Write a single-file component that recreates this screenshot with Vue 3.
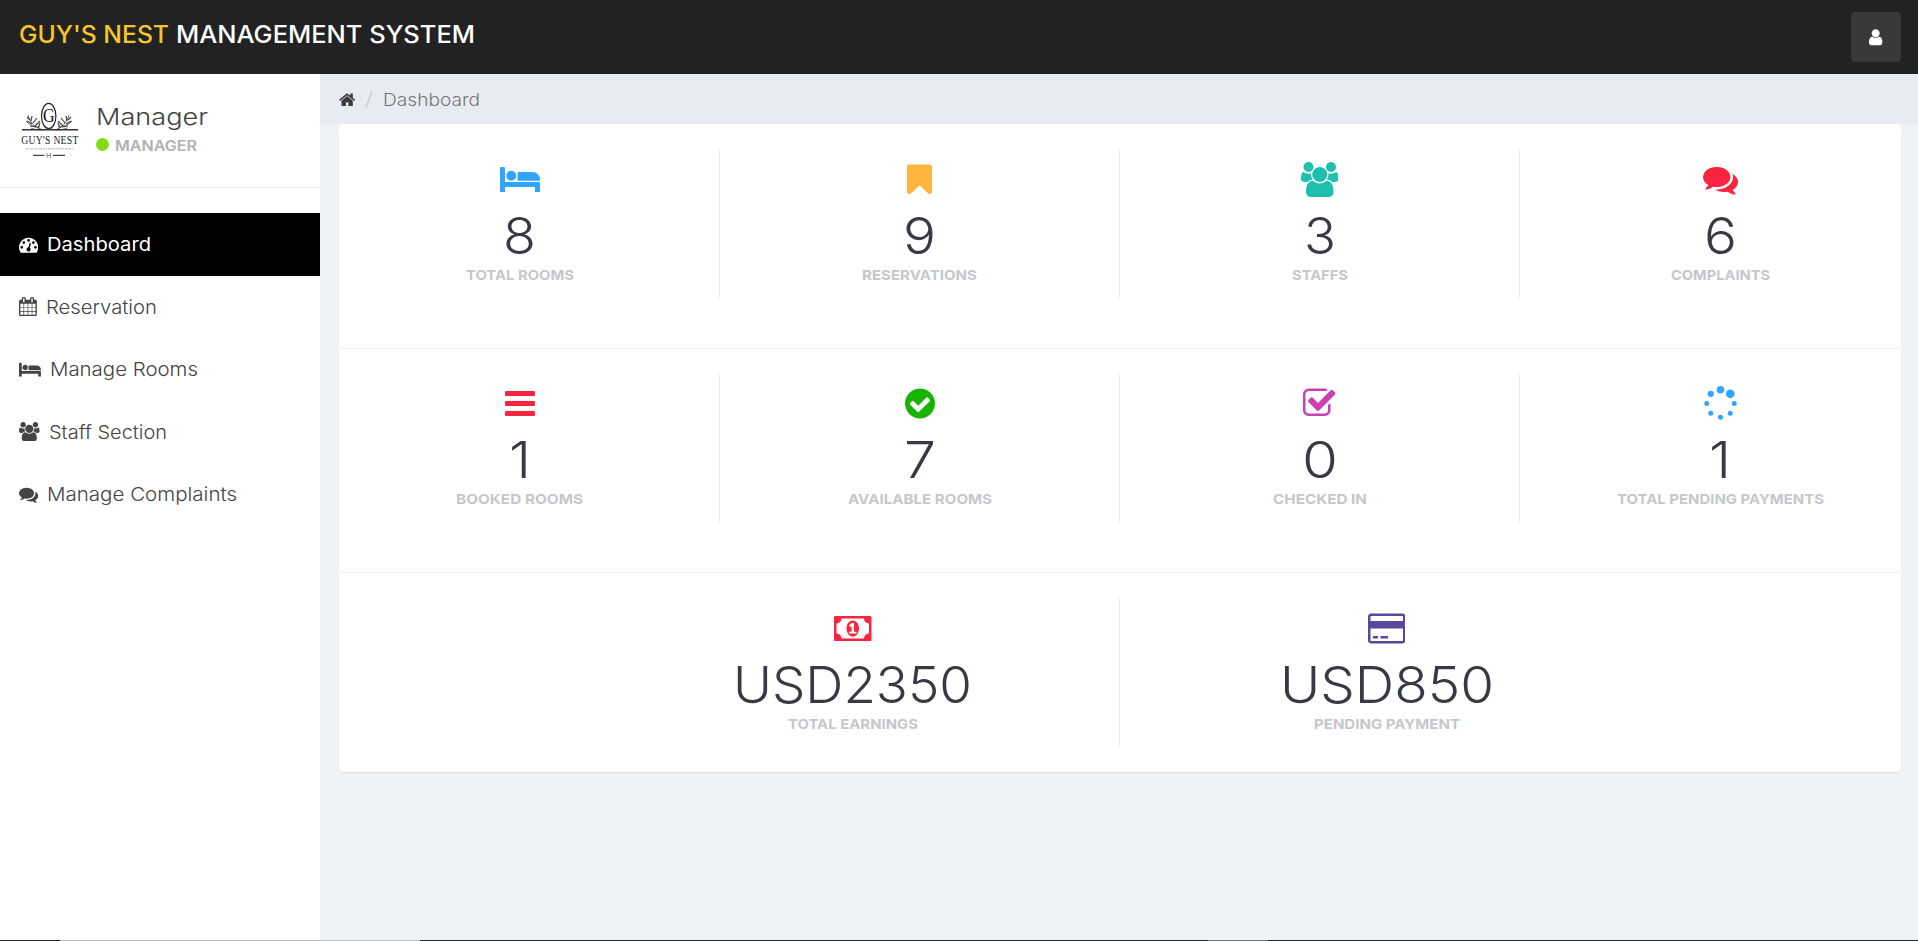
<script setup>
import { h } from 'vue'

const dial = [[256, 1152], [448, 704], [896, 512], [1344, 704], [1536, 1152]]
  .map(([x, y]) => `M${x - 128} ${y}a128 128 0 1 0 256 0a128 128 0 1 0-256 0z`)
  .join('')
const dots = [[398, 1394, 128], [896, 1600, 128], [192, 896, 128], [1394, 1394, 128], [398, 398, 160], [1600, 896, 128], [896, 192, 192], [1394, 398, 224]]
  .map(([x, y, r]) => `M${x - r} ${y}a${r} ${r} 0 1 0 ${2 * r} 0a${r} ${r} 0 1 0-${2 * r} 0z`)
  .join('')

const glyphs = {
  bed: [0, 2048, 'M256 1024h1728q26 0 45 19t19 45v448h-256v-256h-1536v256h-256v-1216q0-26 19-45t45-19h128q26 0 45 19t19 45v704zm576-320q0-106-75-181t-181-75-181 75-75 181 75 181 181 75 181-75 75-181zm1216 256v-64q0-159-112.5-271.5t-271.5-112.5h-704q-26 0-45 19t-19 45v384h1152z'],
  bookmark: [256, 1280, 'M1420 128q23 0 44 9 33 13 52.5 41t19.5 62v1289q0 34-19.5 62t-52.5 41q-19 8-44 8-48 0-83-32l-441-424-441 424q-36 33-83 33-23 0-44-9-33-13-52.5-41t-19.5-62v-1289q0-34 19.5-62t52.5-41q21-9 44-9h1048z'],
  users: [0, 1920, 'M593 896q-162 5-265 128h-134q-82 0-138-40.5t-56-118.5q0-353 124-353 6 0 43.5 21t97.5 42.5 119 21.5q67 0 133-23-5 37-5 66 0 139 81 256zm1071 637q0 120-73 189.5t-194 69.5h-874q-121 0-194-69.5t-73-189.5q0-53 3.5-103.5t14-109 26.5-108.5 43-97.5 62-81 85.5-53.5 111.5-20q10 0 43 21.5t73 48 107 48 135 21.5 135-21.5 107-48 73-48 43-21.5q61 0 111.5 20t85.5 53.5 62 81 43 97.5 26.5 108.5 14 109 3.5 103.5zm-1024-1277q0 106-75 181t-181 75-181-75-75-181 75-181 181-75 181 75 75 181zm704 384q0 159-112.5 271.5t-271.5 112.5-271.5-112.5-112.5-271.5 112.5-271.5 271.5-112.5 271.5 112.5 112.5 271.5zm576 225q0 78-56 118.5t-138 40.5h-134q-103-123-265-128 81-117 81-256 0-29-5-66 66 23 133 23 59 0 119-21.5t97.5-42.5 43.5-21q124 0 124 353zm-128-609q0 106-75 181t-181 75-181-75-75-181 75-181 181-75 181 75 75 181z'],
  comments: [0, 1792, 'M1408 768q0 139-94 257t-256.5 186.5-353.5 68.5q-86 0-176-16-124 88-278 128-36 9-86 16h-3q-11 0-20.5-8t-11.5-21q-1-3-1-6.5t.5-6.5 2-6l2.5-5 3.5-5.5 4-5 4.5-5 4-4.5q5-6 23-25t26-29.5 22.5-29 25-38.5 20.5-44q-124-72-195-177t-71-224q0-139 94-257t256.5-186.5 353.5-68.5 353.5 68.5 256.5 186.5 94 257zm384 256q0 120-71 224.5t-195 176.5q10 24 20.5 44t25 38.5 22.5 29 26 29.5 23 25q1 1 4 4.5t4.5 5 4 5 3.5 5.5l2.5 5 2 6 .5 6.5-1 6.5q-3 14-13 22t-22 7q-50-7-86-16-154-40-278-128-90 16-176 16-271 0-472-132 58 4 88 4 161 0 309-45t264-129q125-92 192-212t67-254q0-77-23-152 129 71 204 178t75 230z'],
  bars: [128, 1536, 'M1664 1344v128q0 26-19 45t-45 19h-1408q-26 0-45-19t-19-45v-128q0-26 19-45t45-19h1408q26 0 45 19t19 45zm0-512v128q0 26-19 45t-45 19h-1408q-26 0-45-19t-19-45v-128q0-26 19-45t45-19h1408q26 0 45 19t19 45zm0-512v128q0 26-19 45t-45 19h-1408q-26 0-45-19t-19-45v-128q0-26 19-45t45-19h1408q26 0 45 19t19 45z'],
  check: [128, 1536, 'M1412 734q0-28-18-46l-91-90q-19-19-45-19t-45 19l-408 407-226-226q-19-19-45-19t-45 19l-91 90q-18 18-18 46 0 27 18 45l362 362q19 19 45 19 27 0 46-19l543-543q18-18 18-45zm252 162q0 209-103 385.5t-279.5 279.5-385.5 103-385.5-103-279.5-279.5-103-385.5 103-385.5 279.5-279.5 385.5-103 385.5 103 279.5 279.5 103 385.5z'],
  checkSquare: [64, 1664, 'M1472 930v318q0 119-84.5 203.5t-203.5 84.5h-832q-119 0-203.5-84.5t-84.5-203.5v-832q0-119 84.5-203.5t203.5-84.5h832q63 0 117 25 15 7 18 23 3 17-9 29l-49 49q-10 10-23 10-3 0-9-2-23-6-45-6h-832q-66 0-113 47t-47 113v832q0 66 47 113t113 47h832q66 0 113-47t47-113v-254q0-13 9-22l64-64q10-10 23-10 6 0 12 3 20 8 20 29zm231-489l-814 814q-24 24-57 24t-57-24l-430-430q-24-24-24-57t24-57l110-110q24-24 57-24t57 24l263 263 647-647q24-24 57-24t57 24l110 110q24 24 24 57t-24 57z'],
  spinner: [0, 1792, dots],
  money: [0, 1920, 'M768 1152h384v-96h-128v-448h-114l-148 137 77 80q42-37 55-57h2v288h-128v96zm512-256q0 70-21 142t-59.5 134-101.5 101-138 39-138-39-101.5-101-59.5-134-21-142 21-142 59.5-134 101.5-101 138-39 138 39 101.5 101 59.5 134 21 142zm512 256v-512q-106 0-181-75t-75-181h-1152q0 106-75 181t-181 75v512q106 0 181 75t75 181h1152q0-106 75-181t181-75zm128-832v1152q0 26-19 45t-45 19h-1792q-26 0-45-19t-19-45v-1152q0-26 19-45t45-19h1792q26 0 45 19t19 45z'],
  card: [0, 1920, 'M1760 128q66 0 113 47t47 113v1216q0 66-47 113t-113 47h-1600q-66 0-113-47t-47-113v-1216q0-66 47-113t113-47h1600zm-1600 128q-13 0-22.5 9.5t-9.5 22.5v224h1664v-224q0-13-9.5-22.5t-22.5-9.5h-1600zm1600 1280q13 0 22.5-9.5t9.5-22.5v-608h-1664v608q0 13 9.5 22.5t22.5 9.5h1600zm-1504-128v-128h256v128h-256zm384 0v-128h384v128h-384z'],
  user: [256, 1280, 'M1536 1399q0 109-62.5 187t-150.5 78h-854q-88 0-150.5-78t-62.5-187q0-85 8.5-160.5t31.5-152 58.5-131 94-89 134.5-34.5q131 128 313 128t313-128q76 0 134.5 34.5t94 89 58.5 131 31.5 152 8.5 160.5zm-256-887q0 159-112.5 271.5t-271.5 112.5-271.5-112.5-112.5-271.5 112.5-271.5 271.5-112.5 271.5 112.5 112.5 271.5z'],
  home: [64, 1664, 'M1472 992v480q0 26-19 45t-45 19h-384v-384h-256v384h-384q-26 0-45-19t-19-45v-480q0-1 .5-3t.5-3l575-474 575 474q1 2 1 6zm223-69l-62 74q-8 9-21 11h-3q-13 0-21-7l-692-577-692 577q-12 8-24 7-13-2-21-11l-62-74q-8-10-7-23.5t11-21.5l719-599q32-26 76-26t76 26l244 204v-195q0-14 9-23t23-9h192q14 0 23 9t9 23v408l219 182q10 8 11 21.5t-7 23.5z'],
  gauge: [0, 1792, dial + 'M1004 1185l101-382q6-26-7.5-48.5t-38.5-29.5-48 6.5-30 39.5l-101 382q-60 5-107 43.5t-63 98.5q-20 77 20 146t117 89 146-20 89-117q16-60-6-117t-72-91zM1792 1152q0 261-141 483-19 29-54 29h-1402q-35 0-54-29-141-221-141-483 0-182 71-348t191-286 286-191 348-71 348 71 286 191 191 286 71 348z'],
  calendar: [64, 1664, 'M192 1664h288v-288h-288v288zm352 0h320v-288h-320v288zm-352-352h288v-320h-288v320zm352 0h320v-320h-320v320zm-352-384h288v-288h-288v288zm736 736h320v-288h-320v288zm-384-736h320v-288h-320v288zm768 736h288v-288h-288v288zm-384-352h320v-320h-320v320zm-352-864v-288q0-13-9.5-22.5t-22.5-9.5h-64q-13 0-22.5 9.5t-9.5 22.5v288q0 13 9.5 22.5t22.5 9.5h64q13 0 22.5-9.5t9.5-22.5zm736 864h288v-320h-288v320zm-384-384h320v-288h-320v288zm384 0h288v-288h-288v288zm32-480v-288q0-13-9.5-22.5t-22.5-9.5h-64q-13 0-22.5 9.5t-9.5 22.5v288q0 13 9.5 22.5t22.5 9.5h64q13 0 22.5-9.5t9.5-22.5zm384-64v1280q0 52-38 90t-90 38h-1408q-52 0-90-38t-38-90v-1280q0-52 38-90t90-38h128v-96q0-66 47-113t113-47h64q66 0 113 47t47 113v96h384v-96q0-66 47-113t113-47h64q66 0 113 47t47 113v96h128q52 0 90 38t38 90z'],
}

const Icon = ({ name, size }) => {
  const [x, w, d] = glyphs[name]
  return h('svg', { viewBox: `${x} 0 ${w} 1792`, width: (w * size) / 1792, height: size, 'aria-hidden': 'true' }, [
    h('path', { d, fill: 'currentColor', 'fill-rule': 'evenodd' }),
  ])
}
Icon.props = ['name', 'size']

// A line of type whose box is its cap height, set to a fixed measure.
const Line = ({ text, width, cap }) =>
  h('svg', { width, height: cap, overflow: 'visible' }, [
    h('text', { x: 0, y: cap, 'font-size': cap / 0.727, fill: 'currentColor', textLength: width, lengthAdjust: 'spacingAndGlyphs' }, text),
  ])
Line.props = ['text', 'width', 'cap']

const menu = [
  { label: 'Dashboard', icon: 'gauge', width: 104, active: true },
  { label: 'Reservation', icon: 'calendar', width: 111 },
  { label: 'Manage Rooms', icon: 'bed', width: 148 },
  { label: 'Staff Section', icon: 'users', width: 118 },
  { label: 'Manage Complaints', icon: 'comments', width: 190 },
]

const rows = [
  [
    { icon: 'bed', tone: 'blue', value: '8', vw: 33, label: 'TOTAL ROOMS', width: 108 },
    { icon: 'bookmark', tone: 'orange', value: '9', vw: 33, label: 'RESERVATIONS', width: 115 },
    { icon: 'users', tone: 'teal', value: '3', vw: 32, label: 'STAFFS', width: 56 },
    { icon: 'comments', tone: 'red', value: '6', vw: 33, label: 'COMPLAINTS', width: 99 },
  ],
  [
    { icon: 'bars', tone: 'red', value: '1', vw: 22, label: 'BOOKED ROOMS', width: 127 },
    { icon: 'check', tone: 'green', value: '7', vw: 32, label: 'AVAILABLE ROOMS', width: 144 },
    { icon: 'checkSquare', tone: 'magenta', value: '0', vw: 36, label: 'CHECKED IN', width: 94 },
    { icon: 'spinner', tone: 'blue', value: '1', vw: 22, label: 'TOTAL PENDING PAYMENTS', width: 207 },
  ],
  [
    { icon: 'money', tone: 'red', value: 'USD2350', vw: 239, label: 'TOTAL EARNINGS', width: 130 },
    { icon: 'card', tone: 'purple', value: 'USD850', vw: 214, label: 'PENDING PAYMENT', width: 146 },
  ],
]
</script>

<template>
  <div class="page">
    <header class="topbar">
      <h1 class="brand">
        <Line class="brand-name" text="GUY'S NEST" :width="150" :cap="17.5" />
        <Line text="MANAGEMENT SYSTEM" :width="299" :cap="17.5" />
      </h1>
      <button class="user-button" aria-label="Account"><Icon name="user" :size="18.7" /></button>
    </header>

    <div class="body">
      <aside class="sidebar">
        <div class="profile">
          <svg class="logo" width="60" height="66" viewBox="0 -4 60 66" overflow="visible">
            <g fill="none" stroke="#444" stroke-width=".8">
              <ellipse cx="28.7" cy="15" rx="7.2" ry="12.6" stroke="#222" stroke-width="1.2" />
              <path d="M21 28C15 27 10 21 8 14M37 28c5-1 10-7 12-14M20 26C13 26 10 24 6 20M38 26c6 0 10-2 14-6M22 29c-4 0-8-.5-11-2M36 29c4 0 8-.5 11-2" />
              <path d="M11 20l1-5M13 22l4-5M15 25l5-5M16 26l-6-1M12 23l-5-3M10 19l-3-3M47 20l-1-5M45 22l-4-5M43 25l-5-5M42 26l6-1M46 23l5-3M48 19l3-3M18 27l2-5M40 27l-2-5" stroke-width="1.2" />
              <path d="M23 29q6-3 12 0" />
            </g>
            <text x="22.9" y="21.3" class="logo-letter" textLength="11.6" lengthAdjust="spacingAndGlyphs">G</text>
            <path d="M2 28.8h56" stroke="#333" stroke-width="1.4" />
            <text x="1.8" y="43.3" class="logo-name" transform="scale(.74 1)" textLength="77" lengthAdjust="spacing">GUY'S NEST</text>
            <path d="M6 47.8h48" stroke="#aaa" stroke-width="1" stroke-dasharray="2 .8 1 .8 3 1" />
            <path d="M13 54.4h11.5M33 54.4h12" stroke="#444" stroke-width="1.1" />
            <path d="M27 52v5M30.5 52v5M27 54.5h3.5" stroke="#777" stroke-width=".8" />
          </svg>
          <div class="profile-text">
            <Line class="profile-name" text="Manager" :width="112" :cap="16.8" />
            <div class="profile-role">
              <span class="status-dot"></span>
              <Line class="role-name" text="MANAGER" :width="82" :cap="10.4" />
            </div>
          </div>
        </div>
        <nav class="menu">
          <a v-for="item in menu" :key="item.label" class="menu-item" :class="{ active: item.active }">
            <Icon :name="item.icon" :size="19.2" />
            <Line class="menu-label" :text="item.label" :width="item.width" :cap="13.5" />
          </a>
        </nav>
      </aside>

      <main class="content">
        <div class="breadcrumb">
          <Icon class="home" name="home" :size="17.6" />
          <svg class="slash" width="8" height="17"><path d="M7 0L1 16.5" stroke="currentColor" stroke-width="1.3" /></svg>
          <Line text="Dashboard" :width="97" :cap="12.8" />
        </div>
        <section class="panel">
          <div v-for="(row, i) in rows" :key="i" class="row">
            <div v-for="cell in row" :key="cell.label" class="cell" :class="{ wide: row.length === 2 }">
              <Icon :class="cell.tone" :name="cell.icon" :size="35" />
              <Line class="value" :text="cell.value" :width="cell.vw" :cap="37" />
              <Line class="label" :text="cell.label" :width="cell.width" :cap="10" />
            </div>
          </div>
        </section>
      </main>
    </div>

    <footer class="edge">
      <i class="dark short"></i><i class="light"></i><i class="dark mid"></i><i class="soft"></i><i class="dark rest"></i>
    </footer>
  </div>
</template>

<style>
body { margin: 0; overflow: hidden; }
</style>

<style scoped>
.page {
  box-sizing: border-box;
  width: 1918px;
  height: 941px;
  display: flex;
  flex-direction: column;
  overflow: hidden;
  background: #eff3f6;
  font-family: Inter, "Liberation Sans", sans-serif;
  font-weight: 300;
}
svg { display: block; flex: none; }
.topbar {
  height: 74px;
  flex: none;
  box-sizing: border-box;
  padding: 12px 17px 12px 18.5px;
  display: flex;
  justify-content: space-between;
  background: #222;
  color: #fff;
}
.brand { margin: 0; padding-top: 13px; display: flex; gap: 7px; font-weight: 500; }
.brand-name { color: #f6c42c; }
.user-button {
  width: 50px;
  height: 50px;
  border: 0;
  border-radius: 4px;
  padding: 0;
  display: flex;
  align-items: center;
  justify-content: center;
  background: #393939;
  color: #fff;
}
.body { flex: 1; display: flex; min-height: 0; }
.sidebar { width: 320px; flex: none; background: #fff; color: #444; }
.profile {
  height: 113px;
  border-bottom: 1px solid #e9ecf2;
  padding-left: 20px;
  display: flex;
}
.logo { margin-top: 23px; }
.logo-letter { font: 400 18px "Liberation Serif", serif; fill: #111; }
.logo-name { font: 400 13px "Liberation Serif", serif; fill: #222; }
.profile-text { padding: 34px 0 0 16px; }
.profile-role {
  margin-top: 13px;
  display: flex;
  align-items: center;
  gap: 6px;
  font-weight: 600;
  color: #b0b0b0;
}
.role-name { margin-top: 3px; }
.status-dot { width: 13px; height: 13px; border-radius: 50%; background: #86dc12; }
.menu { padding-top: 25px; }
.menu-item {
  height: 62.5px;
  padding-left: 19px;
  display: flex;
  align-items: center;
  gap: 9px;
}
.menu-item.active { background: #000; color: #fff; font-weight: 400; }
.menu-label { margin-top: -1px; }
.content { flex: 1; min-width: 0; }
.breadcrumb {
  height: 50px;
  padding-left: 19px;
  display: flex;
  align-items: center;
  background: #e8ebf3;
  color: #777;
}
.home { color: #3a3a3a; margin-top: 1px; }
.slash { margin: 0 9.5px 0 10px; color: #c8cacf; }
.panel {
  width: 1562px;
  margin-left: 19px;
  border-radius: 4px;
  background: #fff;
  box-shadow: 0 1px 1px rgba(0, 0, 0, .08);
}
.row {
  box-sizing: border-box;
  height: 224.5px;
  padding-top: 25px;
  display: flex;
  justify-content: center;
  border-bottom: 1px solid #eff1f4;
}
.row:nth-child(2) .cell { padding-top: 12.4px; }
.row:nth-child(2) .label { margin-top: 16.6px; }
.row:last-child { height: 198.6px; border-bottom: 0; }
.cell {
  box-sizing: border-box;
  width: 400px;
  height: 149px;
  flex: none;
  padding-top: 13px;
  display: flex;
  flex-direction: column;
  align-items: center;
  border-right: 1px solid #eaebee;
}
.cell.wide { width: 533.3px; }
.cell:last-child { border-right: 0; }
.value { margin-top: 20px; color: #373a45; }
.label { margin-top: 16px; font-weight: 700; color: #c6c7ca; }
.blue { color: #30a5ff; }
.orange { color: #ffb53e; }
.teal { color: #1ebfae; }
.red { color: #f9243f; }
.green { color: #18b300; }
.magenta { color: #c840b4; }
.purple { color: #5b479b; }
.edge { height: 1px; flex: none; display: flex; }
.dark { background: #20272f; }
.light { background: #bdbdbd; width: 360px; }
.soft { background: #69727c; width: 60px; }
.short { width: 60px; }
.mid { width: 788px; }
.rest { flex: 1; }
</style>
